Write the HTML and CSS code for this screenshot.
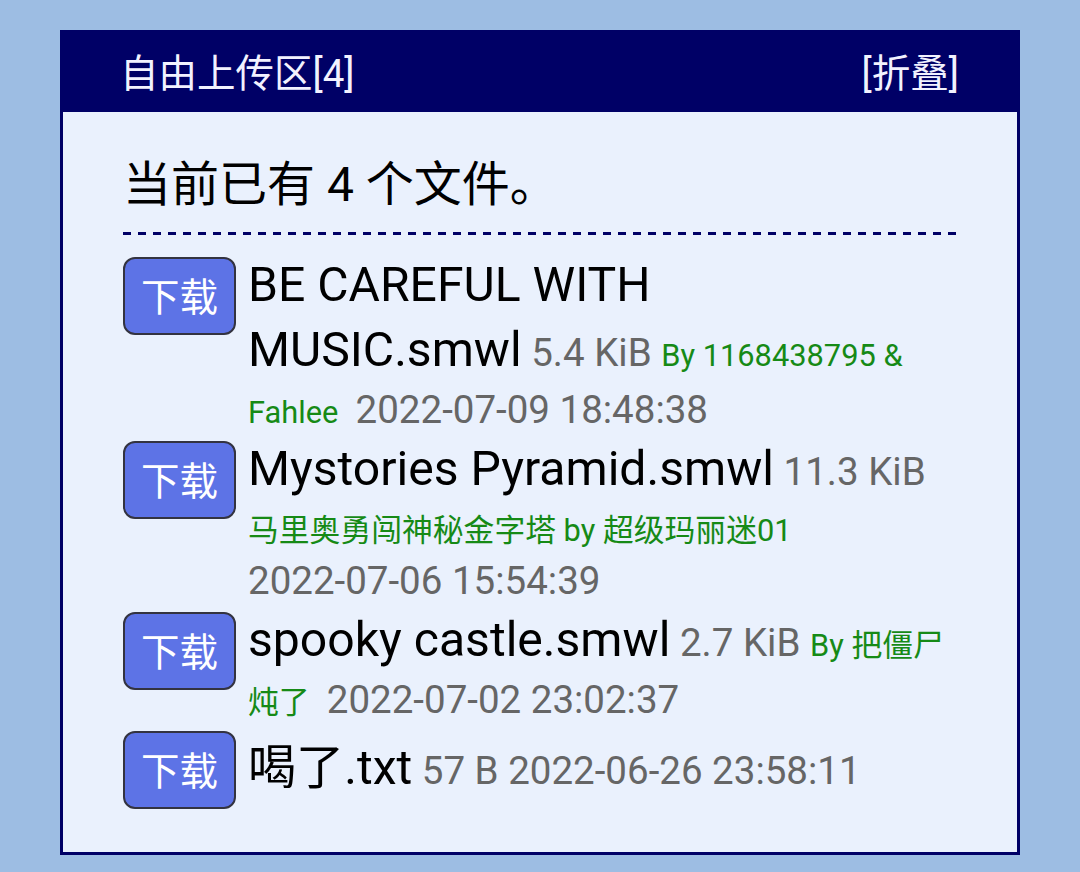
FILE: index.html
```html
<!DOCTYPE html>
<html lang="zh-CN">
<head>
<meta charset="utf-8">
<title>自由上传区</title>
<link rel="stylesheet" href="styles.css">
</head>
<body>
<div class="panel">
  <div class="panel-head">
    <span class="title">自由上传区[4]</span>
    <span class="toggle">[折叠]</span>
  </div>
  <div class="panel-body">
    <div class="count">当前已有 4 个文件。</div>
    <div class="divider"></div>
    <ul class="files">
      <li class="file">
        <span class="btn">下载</span>
        <div class="info"><span class="name">BE CAREFUL WITH MUSIC.smwl</span>&nbsp;<span class="size">5.4&nbsp;KiB</span> <span class="by">By 1168438795 &amp; Fahlee&nbsp;</span> <span class="date">2022-07-09 18:48:38</span></div>
      </li>
      <li class="file">
        <span class="btn">下载</span>
        <div class="info"><span class="name">Mystories Pyramid.smwl</span>&nbsp;<span class="size">11.3&nbsp;KiB</span> <span class="by">马里奥勇闯神秘金字塔 by 超级玛丽迷01&nbsp;</span> <span class="date">2022-07-06 15:54:39</span></div>
      </li>
      <li class="file">
        <span class="btn">下载</span>
        <div class="info"><span class="name">spooky castle.smwl</span>&nbsp;<span class="size">2.7&nbsp;KiB</span> <span class="by">By 把僵尸炖了&nbsp;</span> <span class="date">2022-07-02 23:02:37</span></div>
      </li>
      <li class="file">
        <span class="btn">下载</span>
        <div class="info"><span class="name"><span class="cjk">喝了</span>.txt</span>&nbsp;<span class="size">57&nbsp;B</span> <span class="date">2022-06-26 23:58:11</span></div>
      </li>
    </ul>
  </div>
</div>
</body>
</html>
```

FILE: styles.css
```css
html, body {
  margin: 0;
}

body {
  background: #9dbde3;
  padding: 30px 60px 19px;
  font-family: Roboto, "Noto Sans CJK SC", sans-serif;
}

.panel {
  border: 3px solid #000066;
  background: #eaf1fd;
}

.panel-head {
  background: #000066;
  color: #f2f2ff;
  height: 79px;
  display: flex;
  align-items: center;
  justify-content: space-between;
  padding: 2px 58px 0 57px;
  box-sizing: border-box;
  font-size: 38.5px;
  line-height: 55px;
}

.panel-body {
  padding: 40px 61px 43px 60px;
}

.count {
  font-size: 48px;
  line-height: 66px;
  color: #000;
}

.divider {
  margin-top: 14px;
  height: 3px;
  background: repeating-linear-gradient(to right, #000066 0 8px, transparent 8px 15px);
}

.files {
  list-style: none;
  margin: 17px 0 0;
  padding: 0;
}

.file {
  display: flex;
  align-items: flex-start;
  gap: 12px;
}

.btn {
  flex: none;
  margin-top: 5px;
  font-size: 38.5px;
  line-height: 54px;
  padding: 12px 16px 8px;
  border: 2.5px solid #333340;
  border-radius: 12px;
  background: #5d73e6;
  color: #fff;
}

.info {
  flex: 1;
  min-width: 0;
  font-size: 38.5px;
  line-height: 53px;
  color: #666;
}

.name {
  font-size: 48.1px;
  line-height: 65.4px;
  color: #000;
}

.cjk {
  font-family: "Noto Sans CJK SC", sans-serif;
  line-height: 74px;
}

.size,
.date {
  color: #666;
}

.date {
  white-space: nowrap;
}

.by {
  color: #168a16;
  font-size: 30.8px;
  line-height: 39px;
}
```
